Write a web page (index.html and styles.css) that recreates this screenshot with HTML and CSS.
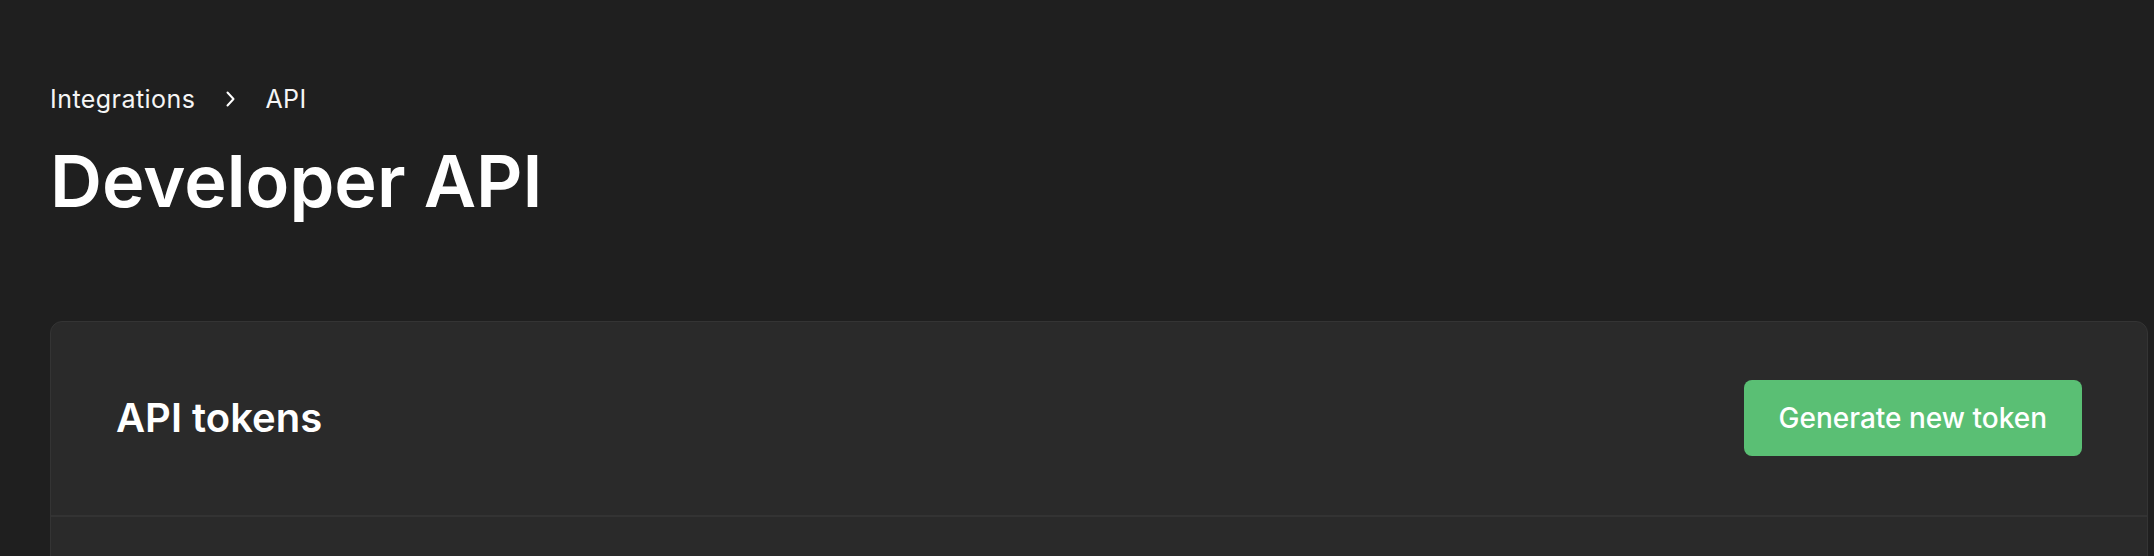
FILE: index.html
```html
<!DOCTYPE html>
<html lang="en">
<head>
<meta charset="utf-8">
<title>Developer API</title>
<link rel="stylesheet" href="styles.css">
</head>
<body>
<main class="page">
  <nav class="breadcrumb">
    <span class="crumb">Integrations</span>
    <svg class="chev" width="10" height="16" viewBox="0 0 10 16" aria-hidden="true"><path d="M1.5 1.5 L7.5 8 L1.5 14.5" fill="none" stroke="#ffffff" stroke-width="2" stroke-linecap="round" stroke-linejoin="round"/></svg>
    <span class="crumb">API</span>
  </nav>
  <h1 class="title">Developer API</h1>
  <section class="card">
    <header class="card-header">
      <h2 class="card-title">API tokens</h2>
      <button class="btn-primary" type="button">Generate new token</button>
    </header>
    <div class="card-body"></div>
  </section>
</main>
</body>
</html>
```
FILE: styles.css
```css
html, body {
  margin: 0;
  padding: 0;
  background: #1f1f1f;
  color: #ffffff;
  font-family: "Inter", "Noto Sans", "Liberation Sans", sans-serif;
  overflow: hidden;
}

.page {
  padding: 83px 6px 0 50px;
}

.breadcrumb {
  display: flex;
  align-items: center;
  font-size: 25px;
  line-height: 32px;
  height: 32px;
  color: #f5f5f5;
}

.crumb {
  font-weight: 400;
  letter-spacing: 0.45px;
}

.chev {
  margin: 0 29px 0 31px;
  width: 10px;
  height: 16px;
}

.title {
  margin: 22px 0 0 0;
  font-size: 72px;
  line-height: 88px;
  font-weight: 600;
}

.card {
  margin-top: 96px;
  background: #2a2a2a;
  border: 1px solid #343434;
  border-radius: 12px;
  min-height: 400px;
}

.card-header {
  display: flex;
  align-items: center;
  justify-content: space-between;
  padding: 58px 65px 59px 65px;
  border-bottom: 2px solid #333333;
}

.card-title {
  margin: 0;
  font-size: 40px;
  line-height: 48px;
  font-weight: 600;
}

.btn-primary {
  height: 76px;
  padding: 0 35px;
  border: none;
  border-radius: 8px;
  background: #5abf74;
  color: #ffffff;
  font-family: "Inter", "Noto Sans", "Liberation Sans", sans-serif;
  font-size: 28px;
  font-weight: 500;
  cursor: pointer;
}
```
